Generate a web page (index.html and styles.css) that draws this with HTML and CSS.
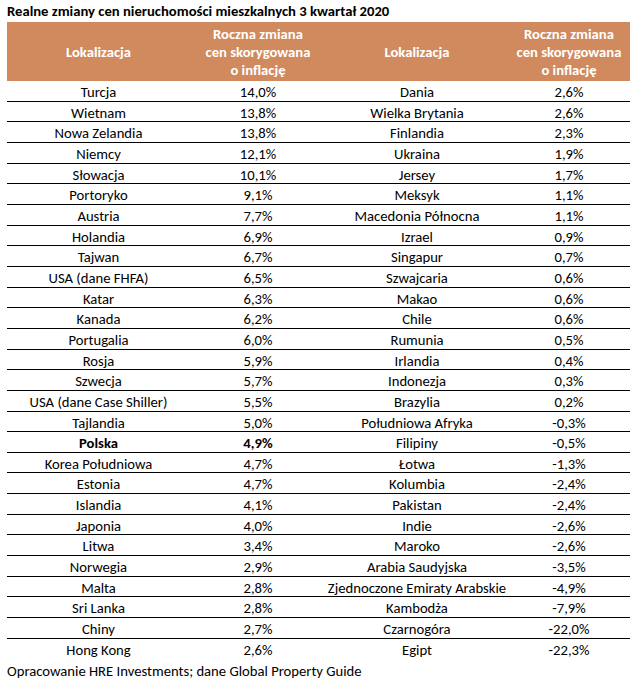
FILE: index.html
```html
<!DOCTYPE html>
<html lang="pl">
<head>
<meta charset="utf-8">
<link rel="stylesheet" href="styles.css">
</head>
<body>
<div class="sheet">
  <div class="title">Realne zmiany cen nieruchomości mieszkalnych 3 kwartał 2020</div>
  <div class="table">
    <div class="head">
      <div class="cell">Lokalizacja</div>
      <div class="cell">Roczna zmiana<br>cen skorygowana<br>o inflację</div>
      <div class="cell">Lokalizacja</div>
      <div class="cell">Roczna zmiana<br>cen skorygowana<br>o inflację</div>
    </div>
    <div class="row"><div>Turcja</div><div>14,0%</div><div>Dania</div><div>2,6%</div></div>
    <div class="row"><div>Wietnam</div><div>13,8%</div><div>Wielka Brytania</div><div>2,6%</div></div>
    <div class="row"><div>Nowa Zelandia</div><div>13,8%</div><div>Finlandia</div><div>2,3%</div></div>
    <div class="row"><div>Niemcy</div><div>12,1%</div><div>Ukraina</div><div>1,9%</div></div>
    <div class="row"><div>Słowacja</div><div>10,1%</div><div>Jersey</div><div>1,7%</div></div>
    <div class="row"><div>Portoryko</div><div>9,1%</div><div>Meksyk</div><div>1,1%</div></div>
    <div class="row"><div>Austria</div><div>7,7%</div><div>Macedonia Północna</div><div>1,1%</div></div>
    <div class="row"><div>Holandia</div><div>6,9%</div><div>Izrael</div><div>0,9%</div></div>
    <div class="row"><div>Tajwan</div><div>6,7%</div><div>Singapur</div><div>0,7%</div></div>
    <div class="row"><div>USA (dane FHFA)</div><div>6,5%</div><div>Szwajcaria</div><div>0,6%</div></div>
    <div class="row"><div>Katar</div><div>6,3%</div><div>Makao</div><div>0,6%</div></div>
    <div class="row"><div>Kanada</div><div>6,2%</div><div>Chile</div><div>0,6%</div></div>
    <div class="row"><div>Portugalia</div><div>6,0%</div><div>Rumunia</div><div>0,5%</div></div>
    <div class="row"><div>Rosja</div><div>5,9%</div><div>Irlandia</div><div>0,4%</div></div>
    <div class="row"><div>Szwecja</div><div>5,7%</div><div>Indonezja</div><div>0,3%</div></div>
    <div class="row"><div>USA (dane Case Shiller)</div><div>5,5%</div><div>Brazylia</div><div>0,2%</div></div>
    <div class="row"><div>Tajlandia</div><div>5,0%</div><div>Południowa Afryka</div><div>-0,3%</div></div>
    <div class="row"><div class="b">Polska</div><div class="b">4,9%</div><div>Filipiny</div><div>-0,5%</div></div>
    <div class="row"><div>Korea Południowa</div><div>4,7%</div><div>Łotwa</div><div>-1,3%</div></div>
    <div class="row"><div>Estonia</div><div>4,7%</div><div>Kolumbia</div><div>-2,4%</div></div>
    <div class="row"><div>Islandia</div><div>4,1%</div><div>Pakistan</div><div>-2,4%</div></div>
    <div class="row"><div>Japonia</div><div>4,0%</div><div>Indie</div><div>-2,6%</div></div>
    <div class="row"><div>Litwa</div><div>3,4%</div><div>Maroko</div><div>-2,6%</div></div>
    <div class="row"><div>Norwegia</div><div>2,9%</div><div>Arabia Saudyjska</div><div>-3,5%</div></div>
    <div class="row"><div>Malta</div><div>2,8%</div><div>Zjednoczone Emiraty Arabskie</div><div>-4,9%</div></div>
    <div class="row"><div>Sri Lanka</div><div>2,8%</div><div>Kambodża</div><div>-7,9%</div></div>
    <div class="row"><div>Chiny</div><div>2,7%</div><div>Czarnogóra</div><div>-22,0%</div></div>
    <div class="row last"><div>Hong Kong</div><div>2,6%</div><div>Egipt</div><div>-22,3%</div></div>
  </div>
  <div class="source">Opracowanie HRE Investments; dane Global Property Guide</div>
</div>
</body>
</html>
```

FILE: styles.css
```css
html, body {
  margin: 0;
  padding: 0;
  background: #ffffff;
}

.sheet {
  padding: 0 0 0 7px;
  width: 623px;
  font-family: Carlito, Calibri, "Open Sans", sans-serif;
  font-size: 14.67px;
  color: #000;
}

.title {
  height: 22px;
  line-height: 22px;
  font-weight: bold;
  font-size: 14.67px;
  white-space: nowrap;
}

.table {
  display: flex;
  flex-direction: column;
  width: 623px;
}

.head,
.row {
  display: grid;
  grid-template-columns: 183px 136px 182px 122px;
}

.head {
  background: #d08a5d;
  color: #ffffff;
  font-weight: bold;
  height: 59px;
  line-height: 18px;
}

.head .cell {
  display: flex;
  align-items: center;
  justify-content: center;
  text-align: center;
}

.row {
  height: 20.67px;
  box-sizing: border-box;
  border-bottom: 1px solid #000;
  padding-top: 3px;
  line-height: 16.67px;
  white-space: nowrap;
}

.row > div {
  text-align: center;
}

.row.last {
  border-bottom: none;
  height: 21.5px;
}

.b { font-weight: bold; }

.source {
  height: 20px;
  padding-top: 2px;
  line-height: 18px;
  white-space: nowrap;
}
```
